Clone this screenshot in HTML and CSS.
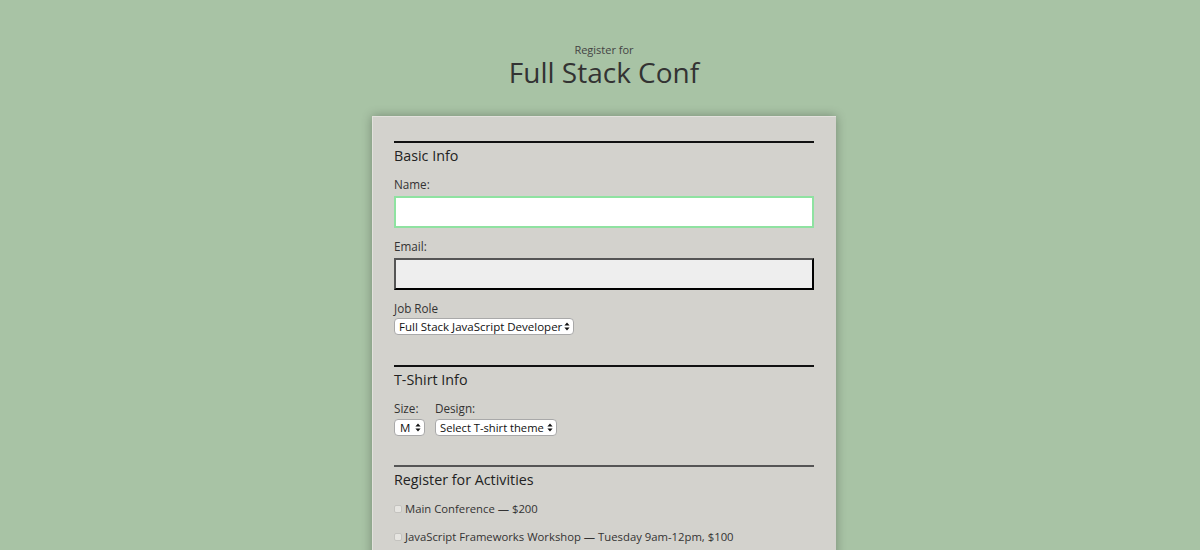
FILE: index.html
```html
<!DOCTYPE html>
<html lang="en">
<head>
<meta charset="utf-8">
<title>Register for Full Stack Conf</title>
<link rel="stylesheet" href="styles.css">
</head>
<body>
<header class="page-header">
  <span class="kicker">Register for</span>
  <h1 class="title">Full Stack Conf</h1>
</header>
<form class="card">
  <section class="group">
    <h2 class="legend">Basic Info</h2>
    <label class="label" for="name">Name:</label>
    <input class="field field-focus" id="name" type="text">
    <label class="label" for="mail">Email:</label>
    <input class="field field-inset" id="mail" type="email">
    <label class="label" for="title">Job Role</label>
    <span class="select-wrap w-role">
      <select class="select" id="title"><option>Full Stack JavaScript Developer</option></select>
      <svg class="arrows" width="6" height="9" viewBox="0 0 6 9"><path d="M3 0.5L5.6 3.6H0.4Z M3 8.5L5.6 5.4H0.4Z" fill="#111"/></svg>
    </span>
  </section>
  <section class="group group-shirt">
    <h2 class="legend">T-Shirt Info</h2>
    <div class="shirt-row">
      <div class="shirt-col">
        <label class="label" for="size">Size:</label>
        <span class="select-wrap w-size">
          <select class="select" id="size"><option>M</option></select>
          <svg class="arrows" width="6" height="9" viewBox="0 0 6 9"><path d="M3 0.5L5.6 3.6H0.4Z M3 8.5L5.6 5.4H0.4Z" fill="#111"/></svg>
        </span>
      </div>
      <div class="shirt-col">
        <label class="label" for="design">Design:</label>
        <span class="select-wrap w-design">
          <select class="select" id="design"><option>Select T-shirt theme</option></select>
          <svg class="arrows" width="6" height="9" viewBox="0 0 6 9"><path d="M3 0.5L5.6 3.6H0.4Z M3 8.5L5.6 5.4H0.4Z" fill="#111"/></svg>
        </span>
      </div>
    </div>
  </section>
  <section class="group group-gray">
    <h2 class="legend">Register for Activities</h2>
    <label class="check"><input type="checkbox" class="box">Main Conference — $200</label>
    <label class="check"><input type="checkbox" class="box">JavaScript Frameworks Workshop — Tuesday 9am-12pm, $100</label>
  </section>
</form>
</body>
</html>
```
FILE: styles.css
```css
html, body {
  margin: 0;
  padding: 0;
}
body {
  background: #a8c3a5;
  font-family: "Open Sans", "Noto Sans", sans-serif;
  color: #2b2b2b;
  height: 550px;
  overflow: hidden;
  padding-left: 8px;
}
.page-header {
  text-align: center;
  padding-top: 44px;
}
.kicker {
  display: block;
  font-size: 11px;
  line-height: 12px;
  color: #444;
}
.title {
  margin: 3px 0 0;
  font-size: 28px;
  line-height: 26px;
  font-weight: 400;
  color: #333;
}
.card {
  width: 420px;
  margin: 31px auto 0;
  padding: 24px 22px 40px 21px;
  background: #d3d2cd;
  box-shadow: 0 0 10px rgba(0, 0, 0, 0.3);
  border-top: 1px solid #e2e1dc;
  border-left: 1px solid #e2e1dc;
}
.group {
  border-top: 2px solid #111;
  padding-top: 4px;
  padding-bottom: 30px;
  display: flex;
  flex-direction: column;
  align-items: flex-start;
}
.group-shirt {
  padding-bottom: 29px;
}
.group-gray {
  border-top-color: #555;
}
.legend {
  margin: 0;
  font-size: 14.3px;
  line-height: 18px;
  font-weight: 400;
  color: #222;
}
.label {
  font-size: 11.7px;
  line-height: 16px;
  color: #333;
  margin-top: 10px;
  margin-bottom: 4px;
}
.group > .legend + .label {
  margin-top: 11px;
}
.field {
  box-sizing: border-box;
  width: 420px;
  height: 32px;
  margin: 0;
  font-size: 14px;
}
.field-focus {
  background: #fff;
  border: 2px solid #8fe2a1;
  outline: none;
}
.field-inset {
  background: #eeeeee;
  border: 2px solid #000;
  border-top-color: #555;
  border-left-color: #555;
}
.select-wrap {
  position: relative;
  display: block;
  margin-top: -1px;
}
.select {
  -webkit-appearance: none;
  appearance: none;
  display: block;
  box-sizing: border-box;
  height: 17px;
  margin: 0;
  padding: 0 9px 0 4px;
  border: 1px solid #a9a9a9;
  border-radius: 4px;
  background: #fff;
  font-family: "Open Sans", "Noto Sans", sans-serif;
  font-size: 11.5px;
  line-height: 15px;
  color: #111;
  width: 100%;
}
.arrows {
  position: absolute;
  right: 4px;
  top: 4px;
  pointer-events: none;
}
.w-role { width: 180px; margin-top: -2px; }
.w-size { width: 31px; }
.w-design { width: 122px; }
.w-size .select { padding-left: 5px; }
.w-design .select { font-size: 11.2px; }
.shirt-row {
  display: flex;
  gap: 10px;
  margin-top: 11px;
}
.shirt-col {
  display: flex;
  flex-direction: column;
  align-items: flex-start;
}
.shirt-col .label {
  margin-top: 0;
  margin-bottom: 4px;
}
.shirt-col .select-wrap {
  margin-top: -1px;
}
.check {
  display: flex;
  align-items: center;
  font-size: 11.3px;
  line-height: 16px;
  color: #333;
  margin-top: 12px;
}
.box {
  -webkit-appearance: none;
  appearance: none;
  box-sizing: border-box;
  width: 8px;
  height: 8px;
  margin: 0 3px 0 0;
  border: 1px solid #c4c3bf;
  border-radius: 2px;
  background: #e6e5e1;
}
```
